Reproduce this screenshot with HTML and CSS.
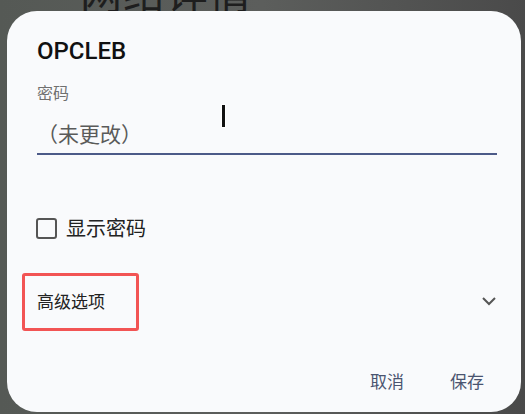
FILE: index.html
```html
<!DOCTYPE html>
<html lang="zh">
<head>
<meta charset="utf-8">
<link rel="stylesheet" href="styles.css">
</head>
<body>
<div class="page">
  <div class="page-title">网络详情</div>
</div>
<div class="dialog">
  <div class="title">OPCLEB</div>
  <div class="label">密码</div>
  <div class="field">
    <span class="value">（未更改）</span>
    <span class="cursor"></span>
  </div>
  <label class="check">
    <span class="box"></span>
    <span class="check-text">显示密码</span>
  </label>
  <div class="advanced">
    <span class="adv-text">高级选项</span>
    <svg class="chev" width="16" height="10" viewBox="0 0 16 10"><path d="M2 2 L8 8 L14 2" fill="none" stroke="#555" stroke-width="2"/></svg>
    <span class="highlight"></span>
  </div>
  <div class="actions">
    <span class="btn">取消</span>
    <span class="btn">保存</span>
  </div>
</div>
</body>
</html>
```
FILE: styles.css
```css
html, body {
  margin: 0;
  padding: 0;
  width: 525px;
  height: 414px;
  overflow: hidden;
}
body {
  background: linear-gradient(90deg, #555955 0%, #5c5e5c 50%, #4a4a4a 100%);
  font-family: Roboto, "Noto Sans CJK SC", sans-serif;
  position: relative;
}
.page {
  padding-left: 80px;
}
.page-title {
  font-family: "Noto Sans CJK SC", sans-serif;
  font-size: 42px;
  line-height: 42px;
  color: #1e1e1e;
  margin-top: -30px;
  letter-spacing: 1px;
}
.dialog {
  position: absolute;
  left: 7px;
  top: 11px;
  width: 514px;
  height: 401px;
  background: #f9fafc;
  border-radius: 30px;
  box-sizing: border-box;
  padding: 26px 24px 0 30px;
  display: flex;
  flex-direction: column;
}
.title {
  font-size: 24px;
  font-weight: 500;
  color: #111;
  line-height: 28px;
}
.label {
  margin-top: 17px;
  font-family: "Noto Sans CJK SC", sans-serif;
  font-size: 16px;
  line-height: 20px;
  color: #707070;
}
.field {
  padding: 17px 0 6px;
  border-bottom: 2px solid #4c5a88;
  position: relative;
  display: flex;
  align-items: center;
}
.value {
  font-family: "Noto Sans CJK SC", sans-serif;
  font-size: 21px;
  color: #5a5a5a;
  line-height: 28px;
}
.cursor {
  position: absolute;
  left: 185px;
  top: 3px;
  width: 3px;
  height: 22px;
  background: #111;
  box-shadow: 0 0 0 1px #fff;
}
.check {
  margin-top: 61px;
  display: flex;
  align-items: center;
  gap: 9px;
  height: 24px;
}
.box {
  width: 17px;
  height: 17px;
  margin-left: -1px;
  border: 2px solid #555;
  border-radius: 3px;
}
.check-text {
  font-family: "Noto Sans CJK SC", sans-serif;
  font-size: 20px;
  color: #222;
  line-height: 24px;
}
.advanced {
  margin-top: 33px;
  position: relative;
  display: flex;
  align-items: center;
  justify-content: space-between;
  height: 58px;
}
.adv-text {
  font-family: "Noto Sans CJK SC", sans-serif;
  font-size: 17px;
  color: #222;
  margin-top: -4px;
}
.chev {
  margin-top: -2px;
}
.highlight {
  position: absolute;
  left: -15px;
  top: 0;
  width: 117px;
  height: 58px;
  box-sizing: border-box;
  border: 3px solid #f25454;
  border-radius: 3px;
}
.actions {
  margin-top: 38px;
  display: flex;
  justify-content: flex-end;
  gap: 46px;
  padding-right: 13px;
}
.btn {
  font-family: "Noto Sans CJK SC", sans-serif;
  font-size: 17px;
  line-height: 24px;
  color: #4a5470;
}
```
